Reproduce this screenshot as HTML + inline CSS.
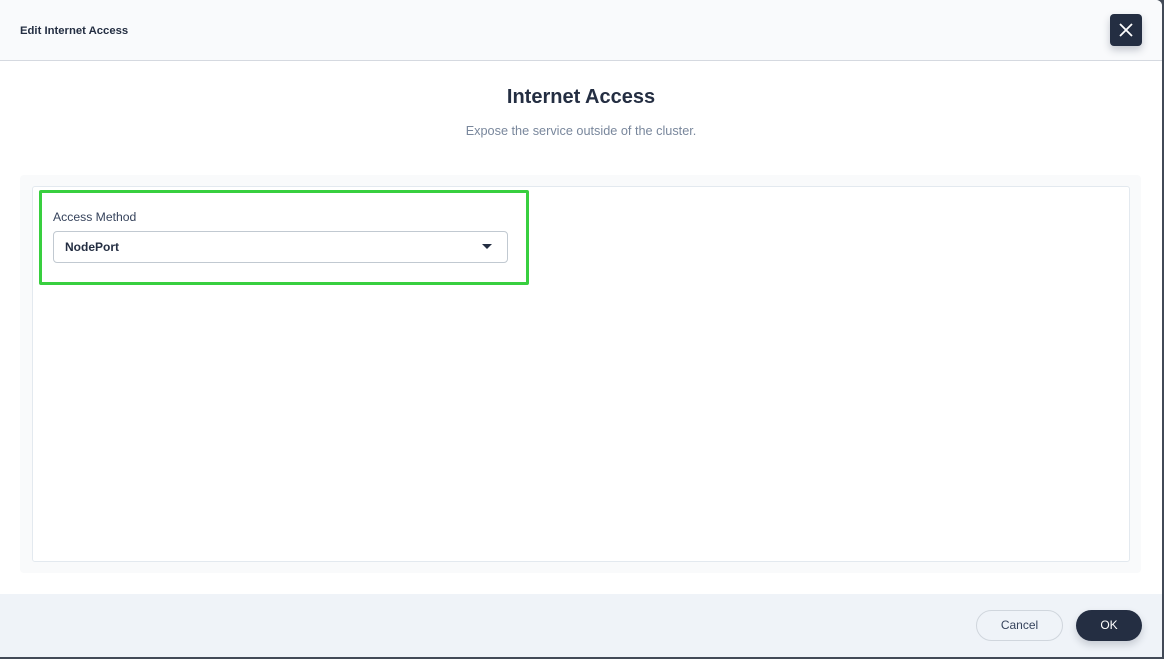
<!DOCTYPE html><html><head><style>
body{margin:0;width:1164px;height:659px;background:#424a57;font-family:"Liberation Sans",sans-serif;overflow:hidden;position:relative}
.m{position:absolute;left:0;top:0;width:1162px;height:657px;background:#fff;border-radius:0 6px 0 0;overflow:hidden}
.hd{position:absolute;left:0;top:0;width:100%;height:60px;background:#f9fafc;border-bottom:1px solid #d5d9e0}
.hd span{position:absolute;left:20px;top:25px;font-size:11.3px;font-weight:bold;color:#242e42}
.x{position:absolute;left:1110px;top:14px;width:32px;height:32px;background:#242e42;border-radius:4px;box-shadow:0 4px 8px rgba(36,46,66,.25)}
.t{position:absolute;left:0;width:100%;text-align:center}
.p{position:absolute;left:20px;top:175px;width:1121px;height:398px;background:#f9fafb;border-radius:4px}
.w{position:absolute;left:32px;top:186px;width:1096px;height:374px;background:#fff;border:1px solid #e3e9ef;border-radius:3px}
.g{position:absolute;left:39px;top:190px;width:484px;height:89px;border:3px solid #38cf3f;border-radius:2px}
.s{position:absolute;left:53px;top:231px;width:453px;height:30px;border:1px solid #c1c9d1;border-radius:4px}
.f{position:absolute;left:0;top:594px;width:100%;height:63px;background:#eff3f8}
.b{position:absolute;top:610px;height:31px;border-radius:16px;font-size:12px;text-align:center;line-height:31px}
</style></head><body><div class="m">
<div class="hd"><span>Edit Internet Access</span></div>
<div class="x"><svg width="32" height="32"><path d="M10 10L22 22M22 10L10 22" stroke="#fff" stroke-width="1.8"/></svg></div>
<div class="t" style="top:86px;font-size:20px;font-weight:bold;color:#242e42">Internet Access</div>
<div class="t" style="top:124px;font-size:12.7px;color:#79879c">Expose the service outside of the cluster.</div>
<div class="p"></div><div class="w"></div>
<div class="g"></div>
<div style="position:absolute;left:53px;top:210px;font-size:12.2px;color:#36435c">Access Method</div>
<div class="s"><span style="position:absolute;left:11px;top:8px;font-size:12px;font-weight:bold;color:#242e42">NodePort</span>
<svg style="position:absolute;left:428px;top:12px" width="10" height="6"><path d="M0 0H10L5 5Z" fill="#242e42"/></svg></div>
<div class="f"></div>
<div class="b" style="left:976px;width:85px;border:1px solid #d0d6dd;color:#36435c;height:29px;line-height:29px">Cancel</div>
<div class="b" style="left:1076px;width:66px;background:#242e42;color:#fff;box-shadow:0 4px 8px rgba(36,46,66,.2)">OK</div>
</div></body></html>
